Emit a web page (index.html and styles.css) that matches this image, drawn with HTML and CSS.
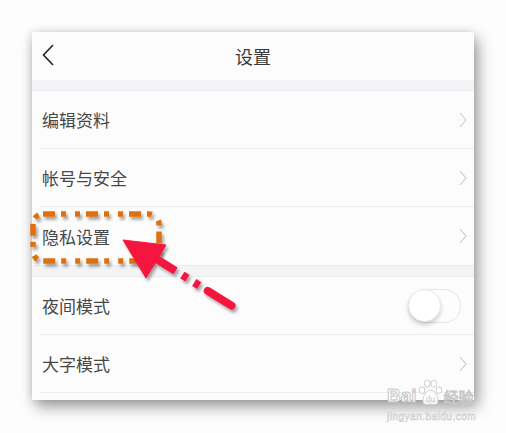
FILE: index.html
```html
<!DOCTYPE html>
<html lang="zh-CN">
<head>
    <meta charset="UTF-8">
    <meta name="viewport" content="width=device-width, initial-scale=1.0">
    <title>设置</title>
    <link rel="stylesheet" href="styles.css">
</head>
<body>
    <div class="screen">
        <div class="header">
            <svg class="back" width="12" height="22" viewBox="0 0 12 22"><path d="M11 1 L1.5 11 L11 21" fill="none" stroke="#222" stroke-width="1.6"/></svg>
            <span class="title">设置</span>
        </div>
        <div class="band"></div>
        <div class="row"><span>编辑资料</span><svg class="more" width="8" height="16" viewBox="0 0 8 16"><path d="M1 1 L7 8 L1 15" fill="none" stroke="#c9c9c9" stroke-width="1.1"/></svg></div>
        <div class="row"><span>帐号与安全</span><svg class="more" width="8" height="16" viewBox="0 0 8 16"><path d="M1 1 L7 8 L1 15" fill="none" stroke="#c9c9c9" stroke-width="1.1"/></svg></div>
        <div class="row last"><span>隐私设置</span><svg class="more" width="8" height="16" viewBox="0 0 8 16"><path d="M1 1 L7 8 L1 15" fill="none" stroke="#c9c9c9" stroke-width="1.1"/></svg></div>
        <div class="band small"></div>
        <div class="row"><span>夜间模式</span><div class="toggle"><div class="knob"></div></div></div>
        <div class="row"><span>大字模式</span><svg class="more" width="8" height="16" viewBox="0 0 8 16"><path d="M1 1 L7 8 L1 15" fill="none" stroke="#c9c9c9" stroke-width="1.1"/></svg></div>
    </div>

    <!-- 标注 -->
    <svg class="marks" width="506" height="433" viewBox="0 0 506 433">
        <defs>
            <filter id="sh" x="-20%" y="-20%" width="140%" height="140%">
                <feDropShadow dx="2" dy="3" stdDeviation="1.6" flood-color="#000" flood-opacity="0.35"/>
            </filter>
        </defs>
        <rect x="33" y="214" width="126" height="47" rx="10" fill="none" stroke="#e0700c" stroke-width="5.5" stroke-dasharray="12 6 5 9 5 6" filter="url(#sh)"/>
        <g filter="url(#sh)" fill="#f5193f" stroke="#f5193f">
            <path d="M123 240 L166 245 L146 278 Z" stroke-width="1" stroke-linejoin="round"/>
            <line x1="150" y1="255" x2="175.5" y2="270.8" stroke-width="8"/>
            <line x1="182.3" y1="275.1" x2="187.4" y2="278.2" stroke-width="8"/>
            <line x1="194.2" y1="282.5" x2="199.2" y2="285.6" stroke-width="8"/>
            <line x1="207.7" y1="290.9" x2="231.5" y2="305.7" stroke-width="8" stroke-linecap="round"/>
        </g>
    </svg>

    <div class="watermark">
        <div class="wm-top">
            <span>Bai</span>
            <svg width="27" height="28" viewBox="0 0 28 30">
                <g fill="rgba(255,255,255,0.85)" stroke="#c8c8c8" stroke-width="1">
                    <ellipse cx="5" cy="12" rx="3" ry="3.6"/>
                    <ellipse cx="10.5" cy="5" rx="3" ry="3.8"/>
                    <ellipse cx="17.5" cy="5" rx="3" ry="3.8"/>
                    <ellipse cx="23" cy="12" rx="3" ry="3.6"/>
                    <path d="M14 12 C9 12 5 20 6 25 C7 29 12 27 14 27 C16 27 21 29 22 25 C23 20 19 12 14 12 Z"/>
                </g>
                <text x="14" y="25" text-anchor="middle" font-size="9" font-family="Liberation Sans, sans-serif" fill="#c8c8c8" stroke="none">du</text>
            </svg>
            <span class="cn">经验</span>
        </div>
        <div class="wm-url">jingyan.baidu.com</div>
    </div>
</body>
</html>
```

FILE: styles.css
```css
body {
    margin: 0;
    padding: 32px 0 0 32px;
    width: 506px;
    height: 433px;
    box-sizing: border-box;
    background-color: #fdfdfd;
    font-family: "Noto Sans CJK SC", "Noto Sans", sans-serif;
    overflow: hidden;
    position: relative;
}
.screen {
    width: 442px;
    height: 368px;
    background-color: #fdfcfd;
    box-shadow: 4px 7px 14px rgba(0, 0, 0, 0.38), -1px 0 8px rgba(0, 0, 0, 0.12);
    overflow: hidden;
}
.header {
    height: 48px;
    display: flex;
    align-items: center;
    justify-content: center;
    position: relative;
}
.header .back {
    position: absolute;
    left: 10px;
    top: 12px;
}
.title {
    font-size: 18px;
    color: #3a3a3a;
}
.band {
    height: 10px;
    background-color: #f4f3f5;
    border-bottom: 1px solid #ebeaec;
}
.band.small {
    border-top: 1px solid #ebeaec;
    border-bottom: 1px solid #ebeaec;
    box-sizing: border-box;
    height: 12px;
}
.row {
    height: 58px;
    margin-left: 9px;
    padding: 0 7px 0 1px;
    display: flex;
    align-items: center;
    justify-content: space-between;
    border-bottom: 1px solid #ececec;
    box-sizing: border-box;
    font-size: 17px;
    color: #474747;
}
.row.last {
    border-bottom: none;
}
.toggle {
    width: 53px;
    height: 34px;
    margin-right: 6px;
    border: 1px solid #e6e6e6;
    border-radius: 17px;
    background-color: #fdfdfd;
    box-sizing: border-box;
    position: relative;
}
.knob {
    position: absolute;
    left: -1px;
    top: -1px;
    width: 33px;
    height: 33px;
    border-radius: 50%;
    background-color: #fff;
    border: 1px solid #e8e8e8;
    box-sizing: border-box;
    box-shadow: 0 3px 4px rgba(0, 0, 0, 0.18);
}
.marks {
    position: absolute;
    left: 0;
    top: 0;
    pointer-events: none;
}
.watermark {
    position: absolute;
    left: 387px;
    top: 378px;
    color: rgba(255, 255, 255, 0.9);
    pointer-events: none;
}
.wm-top {
    display: flex;
    align-items: flex-end;
    height: 29px;
}
.wm-top span {
    font-family: "Liberation Sans", sans-serif;
    font-size: 19px;
    font-weight: bold;
    line-height: 22px;
    -webkit-text-stroke: 1px #c8c8c8;
}
.wm-top .cn {
    font-family: "Noto Sans CJK SC", sans-serif;
    font-size: 15px;
    line-height: 20px;
    font-weight: normal;
}
.wm-url {
    margin-top: 4px;
    font-family: "Liberation Sans", sans-serif;
    font-size: 10px;
    letter-spacing: 0.5px;
    -webkit-text-stroke: 0.5px #c8c8c8;
}
```
